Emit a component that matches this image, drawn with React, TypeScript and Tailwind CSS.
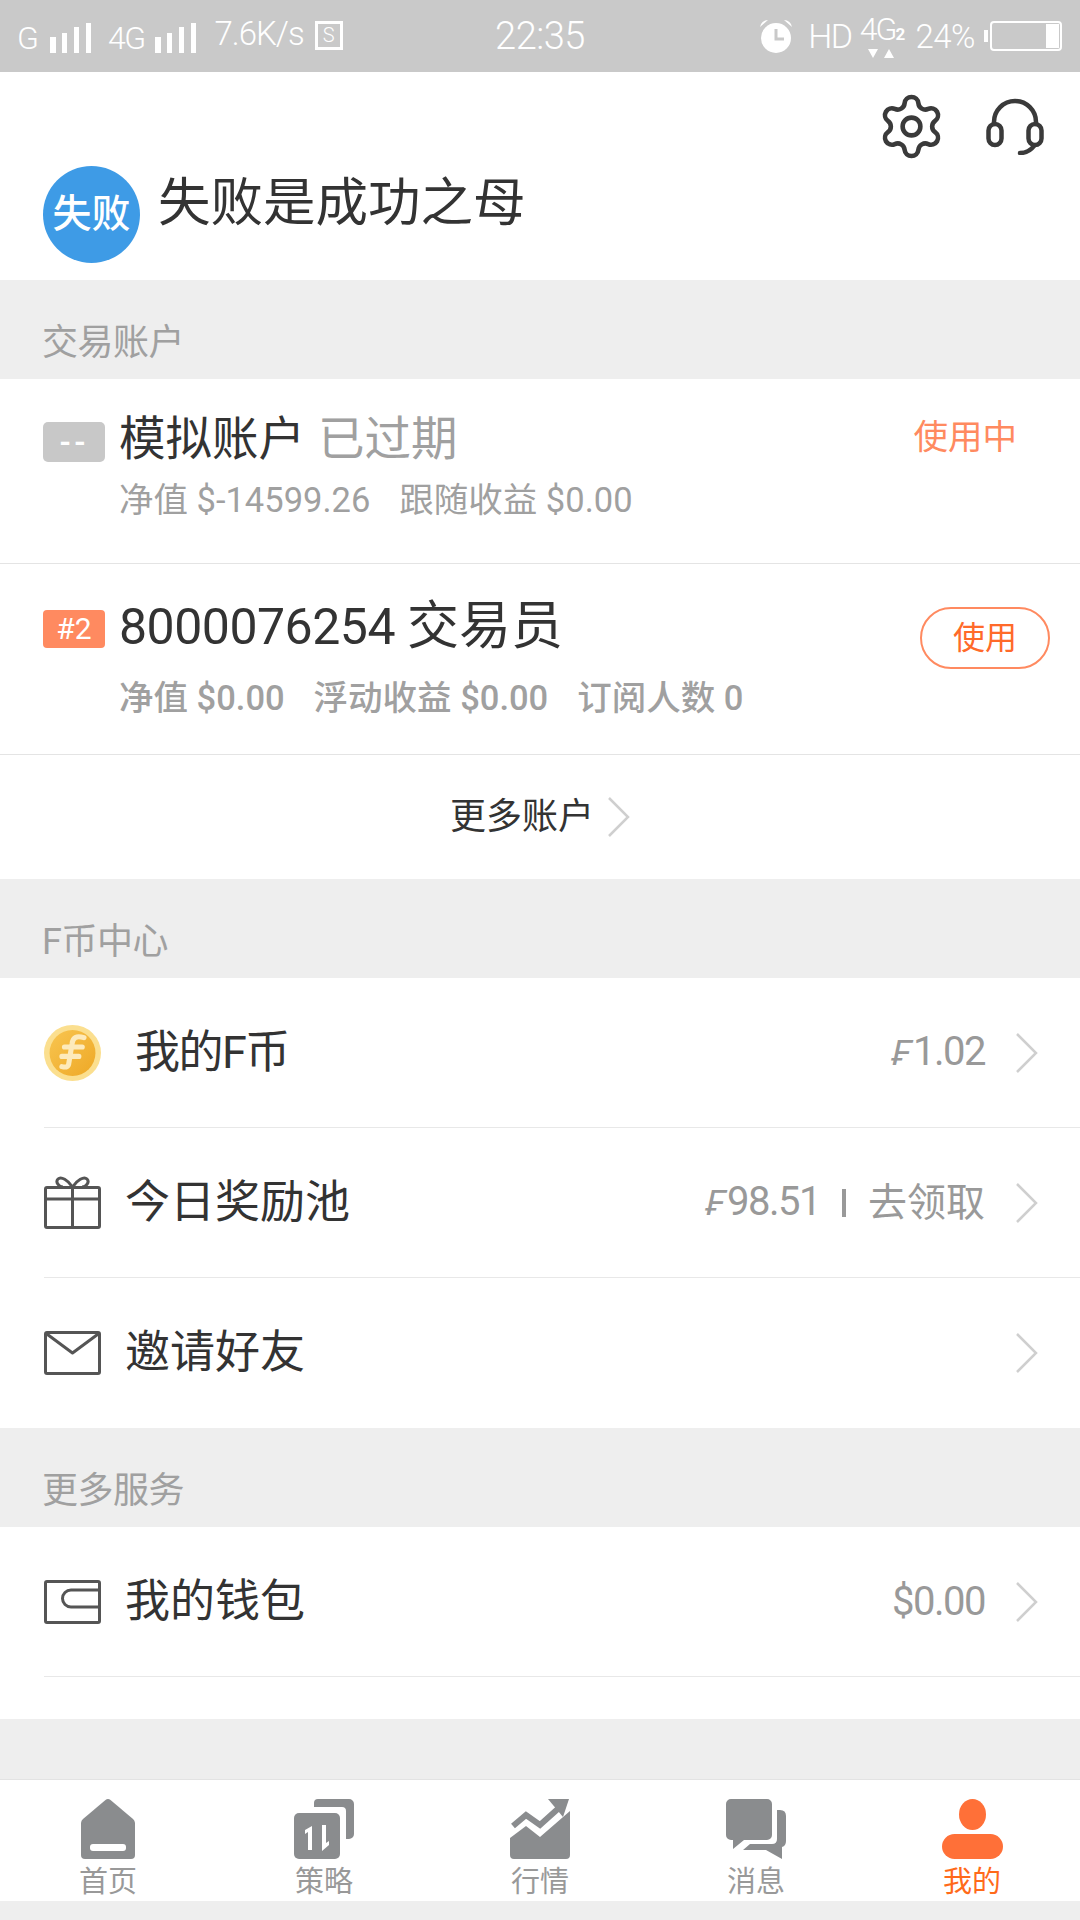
import { Settings } from 'lucide-react'

function Bars() {
  return (
    <svg width="42" height="30" viewBox="0 0 42 30" fill="#fff">
      <rect x="0" y="14" width="6" height="16" />
      <rect x="12" y="10" width="5" height="20" />
      <rect x="24" y="4" width="5" height="26" />
      <rect x="36" y="0" width="5" height="30" />
    </svg>
  )
}

function Chevron({ className = '' }: { className?: string }) {
  return (
    <svg className={className} width="22" height="40" viewBox="0 0 22 40" fill="none" stroke="#cfcfcf" strokeWidth="2.5">
      <polyline points="1,1 20,20 1,39" />
    </svg>
  )
}

function Coin() {
  return (
    <svg width="67" height="66" viewBox="0 0 67 66">
      <defs>
        <linearGradient id="coin" x1="0" y1="0" x2="1" y2="1">
          <stop offset="0" stopColor="#f8c550" />
          <stop offset="1" stopColor="#eea826" />
        </linearGradient>
      </defs>
      <ellipse cx="33.5" cy="33" rx="33.5" ry="33" fill="#fbdf8f" />
      <ellipse cx="33.5" cy="33" rx="27" ry="27" fill="url(#coin)" />
      <path d="M47 15c-9-3-13 0-14 7l-4 24c-1 4-4 4-8 3M24 26h21M21 37h20" fill="none" stroke="#fdeabb" strokeWidth="6" strokeLinecap="round" />
    </svg>
  )
}

function Gift() {
  return (
    <svg width="57" height="53" viewBox="0 0 57 53" fill="none" stroke="#555" strokeWidth="3" strokeLinejoin="round">
      <rect x="1.5" y="11.5" width="54" height="40" rx="1.5" />
      <path d="M1.5 23H55.5M28.5 11.5V51.5" />
      <path d="M28.5 11C24 4 17 0 14 3c-3 3 1 8 5 8M28.5 11C33 4 40 0 43 3c3 3-1 8-5 8" />
    </svg>
  )
}

function Mail() {
  return (
    <svg width="57" height="44" viewBox="0 0 57 44" fill="none" stroke="#555" strokeWidth="3" strokeLinejoin="round">
      <rect x="1.5" y="1.5" width="54" height="41" rx="1.5" />
      <path d="M1.5 2L28.5 22L55.5 2" />
    </svg>
  )
}

function Wallet() {
  return (
    <svg width="57" height="44" viewBox="0 0 57 44" fill="none" stroke="#555" strokeWidth="3" strokeLinejoin="round">
      <rect x="1.5" y="1.5" width="54" height="41" rx="1.5" />
      <path d="M55.5 10H27a8.5 8.5 0 0 0 0 17H55.5" />
    </svg>
  )
}

function Headset() {
  return (
    <svg width="58" height="58" viewBox="0 0 58 58" fill="none" stroke="#3a3a3a" strokeWidth="4.5" strokeLinecap="round">
      <path d="M8 27V25a21 21 0 0 1 42 0V27" />
      <rect x="2.5" y="27" width="13" height="21" rx="6.5" />
      <rect x="42.5" y="27" width="13" height="21" rx="6.5" />
      <path d="M48 49c-3 4-7 7-14 7" />
    </svg>
  )
}

function HomeIcon() {
  return (
    <svg width="54" height="60" viewBox="0 0 54 60" fill="#8a8c8e">
      <path d="M24.5 1a4 4 0 0 1 5 0L52 20a6 6 0 0 1 2 4V56a4 4 0 0 1-4 4H4a4 4 0 0 1-4-4V24a6 6 0 0 1 2-4Z" />
      <rect x="9" y="45" width="36" height="7" rx="3" fill="#fff" />
    </svg>
  )
}

function StrategyIcon() {
  return (
    <svg width="60" height="60" viewBox="0 0 60 60" fill="#8a8c8e">
      <path d="M20 4a4 4 0 0 1 4-4H55a5 5 0 0 1 5 5V35a5 5 0 0 1-5 5H52V12a4 4 0 0 0-4-4H20Z" />
      <rect x="0" y="14" width="46" height="46" rx="5" />
      <path d="M18 27V51H14V33L11 35V31ZM28 26H32V44L35 42V46L28 52Z" fill="#fff" />
    </svg>
  )
}

function ChartIcon() {
  return (
    <svg width="60" height="60" viewBox="0 0 60 60" fill="#8a8c8e">
      <path d="M0 39L16 27L30 38L60 12V56a4 4 0 0 1-4 4H4a4 4 0 0 1-4-4Z" />
      <path d="M3 27L16 16L30 26L50 8" fill="none" stroke="#8a8c8e" strokeWidth="6" />
      <path d="M38 0H59L53 18Z" />
    </svg>
  )
}

function MessageIcon() {
  return (
    <svg width="60" height="60" viewBox="0 0 60 60" fill="#8a8c8e">
      <path d="M5 0H41a5 5 0 0 1 5 5V36a5 5 0 0 1-5 5H18L7 50V41H5a5 5 0 0 1-5-5V5a5 5 0 0 1 5-5Z" />
      <path d="M17 51L24 45H46Q51 45 51 40V11H54Q60 11 60 17V42Q60 47 56 48V60L40 51Z" />
    </svg>
  )
}

function PersonIcon() {
  return (
    <svg width="61" height="60" viewBox="0 0 61 60" fill="#ff7038">
      <ellipse cx="30.5" cy="15.5" rx="13.5" ry="15.5" />
      <rect x="0" y="35" width="61" height="25" rx="12.5" />
    </svg>
  )
}

function FCoinSign() {
  return <span className="mr-[3px] inline-block -skew-x-12 text-[35px]">₣</span>
}

function SectionLabel({ children, className = '' }: { children: React.ReactNode; className?: string }) {
  return (
    <div className={`flex items-end bg-[#eeeeee] pl-[42px] text-[36px] leading-[44px] tracking-[-0.5px] text-[#a0a0a0] ${className}`}>
      {children}
    </div>
  )
}

function MenuRow({ icon, title, titleClass = 'ml-[24px]', right, border = true, h = 'h-[150px]' }: {
  icon: React.ReactNode
  title: string
  titleClass?: string
  right?: React.ReactNode
  border?: boolean
  h?: string
}) {
  return (
    <div className={`ml-[44px] flex items-center pr-[42px] ${h} ${border ? 'border-b border-[#e8e8e8]' : ''}`}>
      <div className="flex w-[57px] shrink-0 items-center">{icon}</div>
      <span className={`text-[45px] leading-[56px] text-[#333333] ${titleClass}`}>{title}</span>
      <div className="ml-auto flex items-center text-[40px] leading-[50px] text-[#999999]">
        {right}
        <Chevron className="ml-[31px]" />
      </div>
    </div>
  )
}

const tabs = [
  { label: '首页', icon: <HomeIcon /> },
  { label: '策略', icon: <StrategyIcon /> },
  { label: '行情', icon: <ChartIcon /> },
  { label: '消息', icon: <MessageIcon /> },
  { label: '我的', icon: <PersonIcon />, active: true },
]

export default function App() {
  return (
    <div className="flex h-[1920px] w-[1080px] flex-col overflow-hidden bg-[#eeeeee] font-['Roboto','Noto_Sans_CJK_SC',sans-serif]">
      {/* Status bar */}
      <div className="grid h-[72px] shrink-0 grid-cols-[1fr_auto_1fr] items-center bg-[#c9c9c9] font-light text-white">
        <div className="flex items-center pl-[17px] pt-[4px]">
          <span className="text-[32px] leading-none">G</span>
          <span className="ml-[11px] flex"><Bars /></span>
          <span className="ml-[16px] text-[32px] leading-none tracking-[-1.5px]">4G</span>
          <span className="ml-[10px] flex"><Bars /></span>
          <span className="ml-[18px] -translate-y-[5px] text-[33px] leading-none tracking-[-1px]">7.6K/s</span>
          <span className="ml-[11px] flex h-[29px] w-[28px] -translate-y-[3px] items-center justify-center border-[3px] border-white text-[20px] leading-none">S</span>
        </div>
        <span className="text-[38px] leading-none tracking-[-0.5px]">22:35</span>
        <div className="flex items-center justify-end pr-[18px]">
          <svg width="34" height="34" viewBox="0 0 34 34" fill="#fff">
            <circle cx="17" cy="19" r="15" />
            <path d="M1 8a8 8 0 0 1 8-7zM33 8a8 8 0 0 0-8-7z" />
            <path d="M17 10V20H25" fill="none" stroke="#c9c9c9" strokeWidth="3" />
          </svg>
          <span className="ml-[15px] text-[34px] leading-none tracking-[-1.5px]">HD</span>
          <div className="ml-[5px] flex w-[50px] flex-col items-center">
            <span className="whitespace-nowrap text-[32px] leading-[30px] tracking-[-2px]">4G<span className="text-[17px] font-bold">2</span></span>
            <svg width="26" height="10" viewBox="0 0 26 10" fill="#fff">
              <path d="M0 0H10L5 9ZM16 9H26L21 0Z" />
            </svg>
          </div>
          <span className="ml-[9px] text-[33px] leading-none tracking-[-0.5px]">24%</span>
          <span className="ml-[9px] h-[12px] w-[4px] bg-white" />
          <div className="ml-[2px] flex h-[30px] w-[72px] justify-end rounded-[4px] border-[2px] border-white p-[1px]">
            <div className="w-[13px] bg-white" />
          </div>
        </div>
      </div>

      {/* Profile header */}
      <div className="h-[208px] shrink-0 bg-white">
        <div className="flex h-[83px] items-end justify-end pr-[36px]">
          <Settings size={71} strokeWidth={1.55} color="#3a3a3a" className="mb-[-7px]" />
          <span className="ml-[39px] flex"><Headset /></span>
        </div>
        <div className="mt-[11px] flex items-center pl-[43px]">
          <div className="flex h-[97px] w-[97px] items-center justify-center rounded-full bg-[#3e9be6] text-[39px] font-medium leading-none text-white">失败</div>
          <span className="ml-[18px] -translate-y-[12px] text-[52.5px] leading-[60px] text-[#333333]">失败是成功之母</span>
        </div>
      </div>

      <SectionLabel className="h-[99px] pb-[14px]">交易账户</SectionLabel>

      {/* Accounts */}
      <div className="shrink-0 bg-white">
        <div className="flex h-[185px] items-start border-b border-[#e4e4e4] pl-[43px] pr-[63px] pt-[36px]">
          <div className="mt-[7px] flex h-[40px] w-[62px] items-center justify-center rounded-[5px] bg-[#c8c8c8] text-[30px] font-bold leading-none tracking-[3px] text-white">--</div>
          <div className="ml-[14px]">
            <div className="flex h-[44px] translate-y-[2px] items-center text-[46.5px] leading-[44px]">
              <span className="text-[#333333]">模拟账户</span>
              <span className="ml-[13px] text-[#a0a0a0]">已过期</span>
            </div>
            <div className="mt-[19px] flex text-[34.5px] leading-[44px] text-[#a0a0a0]">
              <span>净值 $-14599.26</span>
              <span className="ml-[29px]">跟随收益 $0.00</span>
            </div>
          </div>
          <span className="ml-auto text-[34.5px] leading-[44px] text-[#ff8a60]">使用中</span>
        </div>

        <div className="flex h-[191px] items-start border-b border-[#e4e4e4] pl-[43px] pr-[30px] pt-[41px]">
          <div className="mt-[5px] flex h-[38px] w-[62px] items-center justify-center rounded-[4px] bg-[#ff8a60] text-[30px] leading-none text-white">#2</div>
          <div className="ml-[14px]">
            <div className="h-[44px] whitespace-nowrap text-[50px] leading-[44px] tracking-[-0.5px] text-[#333333]">
              8000076254 <span className="text-[52px] tracking-normal">交易员</span>
            </div>
            <div className="mt-[27px] flex text-[34.5px] font-medium leading-[44px] text-[#a0a0a0]">
              <span>净值 $0.00</span>
              <span className="ml-[29px]">浮动收益 $0.00</span>
              <span className="ml-[29px]">订阅人数 0</span>
            </div>
          </div>
          <div className="ml-auto mt-[2px] flex h-[62px] w-[130px] items-center justify-center rounded-full border-[2px] border-[#ff8a60] text-[32px] leading-none text-[#ff6a2a]">使用</div>
        </div>

        <div className="flex h-[124px] items-center justify-center text-[36px] leading-[44px] text-[#333333]">
          <span>更多账户</span>
          <Chevron className="ml-[14px]" />
        </div>
      </div>

      <SectionLabel className="h-[99px] pb-[14px]">F币中心</SectionLabel>

      {/* F币 */}
      <div className="shrink-0 bg-white">
        <MenuRow icon={<Coin />} title="我的F币" titleClass="ml-[34px] tracking-[-1.5px]" right={<span className="tracking-[-1.5px]"><FCoinSign />1.02</span>} />
        <MenuRow icon={<Gift />} title="今日奖励池" right={
          <>
            <span className="tracking-[-1.5px]"><FCoinSign />98.51</span>
            <span className="mx-[22px] h-[28px] w-[4px] bg-[#999999]" />
            <span className="text-[39px]">去领取</span>
          </>
        } />
        <MenuRow icon={<Mail />} title="邀请好友" border={false} />
      </div>

      <SectionLabel className="h-[99px] pb-[14px]">更多服务</SectionLabel>

      {/* 钱包 */}
      <div className="shrink-0 bg-white">
        <MenuRow icon={<Wallet />} title="我的钱包" right={<span className="tracking-[-1.5px]">$0.00</span>} />
        <div className="h-[42px]" />
      </div>

      <div className="flex-1" />

      {/* Bottom tabs */}
      <div className="grid h-[122px] shrink-0 grid-cols-5 border-t border-[#e3e3e3] bg-white pt-[19px]">
        {tabs.map(tab => (
          <div key={tab.label} className="flex flex-col items-center">
            <div className="flex h-[60px] items-center justify-center">{tab.icon}</div>
            <span className={`mt-[6px] text-[29px] leading-[34px] ${tab.active ? 'text-[#ff6a1a]' : 'text-[#999999]'}`}>{tab.label}</span>
          </div>
        ))}
      </div>
      <div className="h-[19px] shrink-0" />
    </div>
  )
}
